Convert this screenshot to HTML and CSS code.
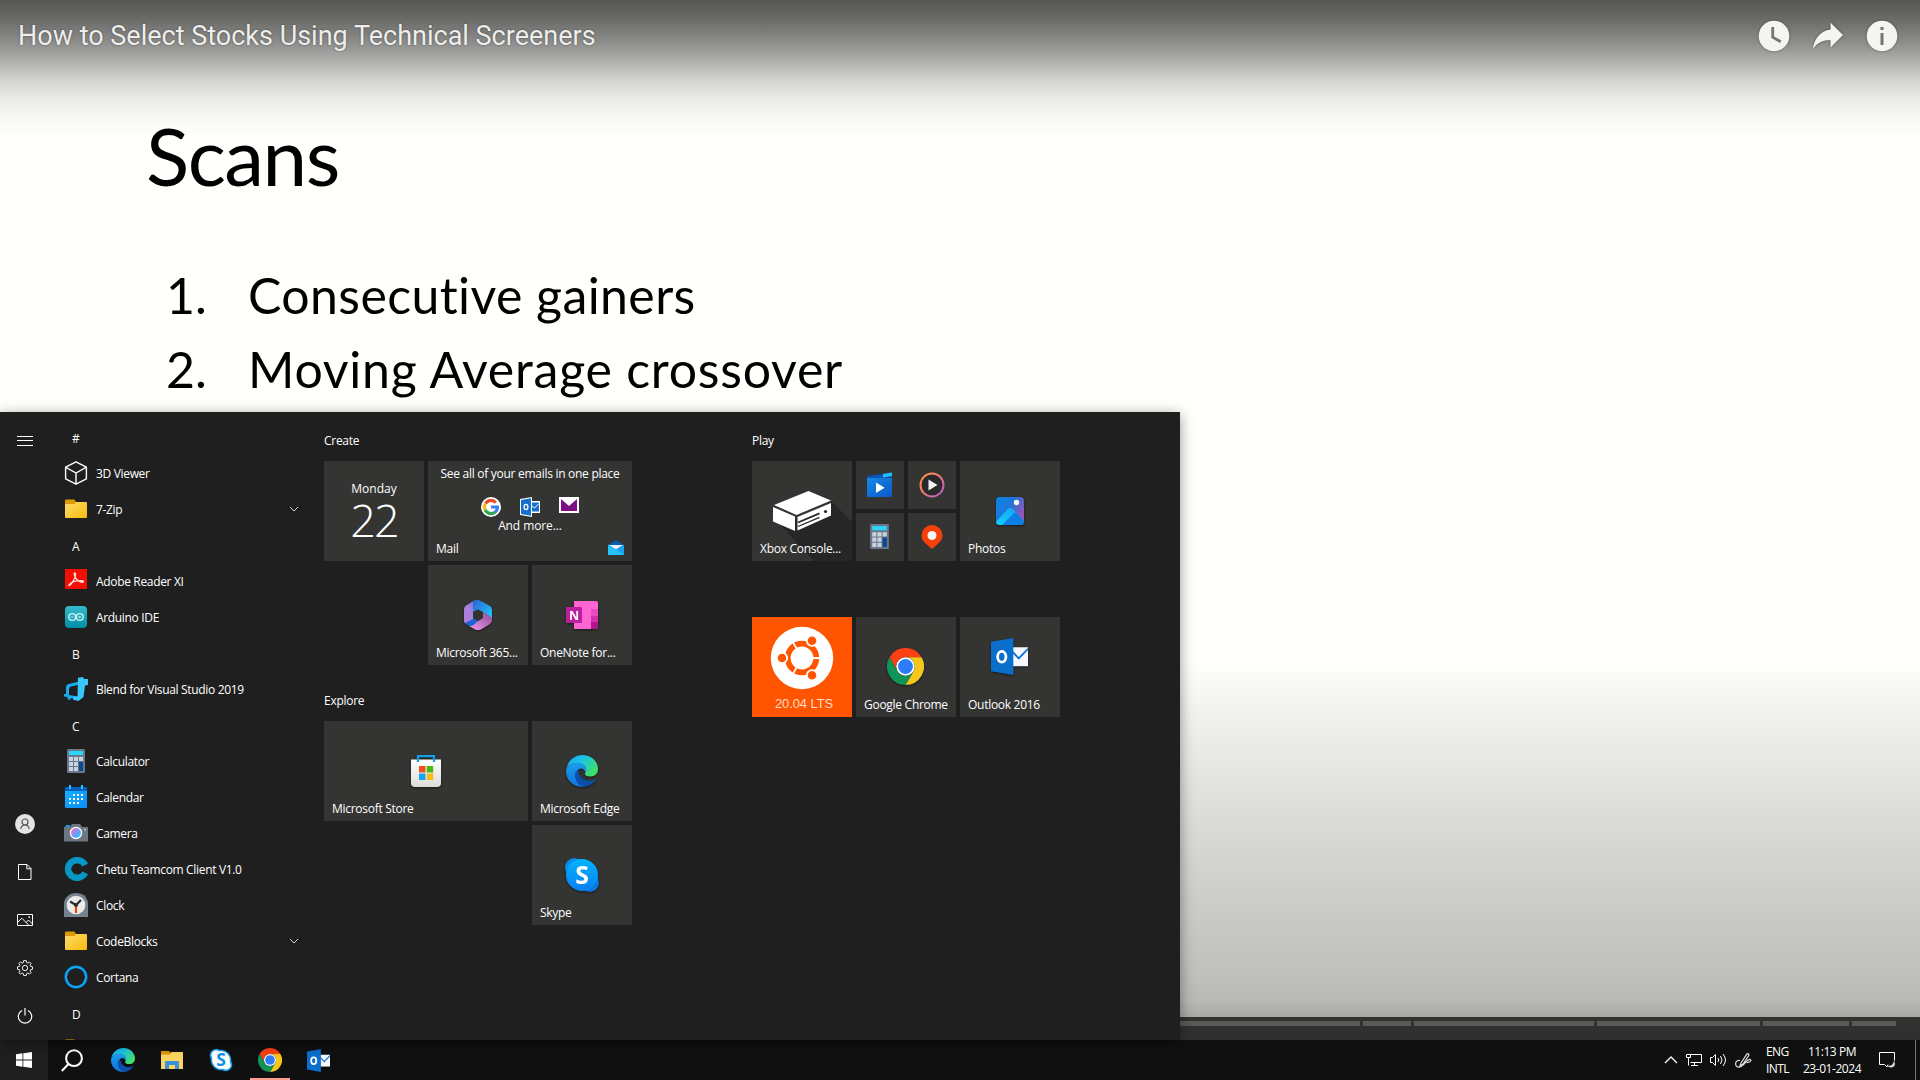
FILE: index.html
```html
<!DOCTYPE html>
<html lang="en">
<head>
<meta charset="utf-8">
<title>How to Select Stocks Using Technical Screeners</title>
<link rel="stylesheet" href="styles.css">
</head>
<body>
<svg class="defs" width="0" height="0" aria-hidden="true">
  <defs>
    <linearGradient id="gEdgeTop" x1="0" y1="0" x2="1" y2=".6"><stop offset="0" stop-color="#1aa5f0"/><stop offset=".45" stop-color="#18c3e6"/><stop offset="1" stop-color="#3fe06a"/></linearGradient>
    <linearGradient id="gEdgeLeft" x1="0" y1="0" x2="0" y2="1"><stop offset="0" stop-color="#1b9de8"/><stop offset="1" stop-color="#0f72e0"/></linearGradient>
    <linearGradient id="gFolder" x1="0" y1="0" x2="1" y2="1"><stop offset="0" stop-color="#ffda6b"/><stop offset="1" stop-color="#f5bc0c"/></linearGradient>
    <linearGradient id="gSkype" x1="0" y1="0" x2="0" y2="1"><stop offset="0" stop-color="#00b4ff"/><stop offset="1" stop-color="#0a7ff0"/></linearGradient>
    <linearGradient id="gArd" x1="0" y1="0" x2="0" y2="1"><stop offset="0" stop-color="#35bccb"/><stop offset="1" stop-color="#008ca4"/></linearGradient>
    <linearGradient id="gLens" x1="0" y1="0" x2="1" y2="1"><stop offset=".1" stop-color="#ff66c4"/><stop offset=".6" stop-color="#58a6ff"/><stop offset="1" stop-color="#2ad0ff"/></linearGradient>
    <linearGradient id="gCal" x1="0" y1="0" x2="1" y2="1"><stop offset="0" stop-color="#12b2ff"/><stop offset="1" stop-color="#0a8bf5"/></linearGradient>
    <linearGradient id="gMovie" x1="0" y1="0" x2="1" y2="1"><stop offset="0" stop-color="#1689e6"/><stop offset="1" stop-color="#0b57c9"/></linearGradient>
    <linearGradient id="gRing" x1="0" y1="0" x2="1" y2="1"><stop offset="0" stop-color="#ff9a3c"/><stop offset=".5" stop-color="#f07878"/><stop offset="1" stop-color="#a85ad8"/></linearGradient>
    <linearGradient id="gPhoto" x1="0" y1="0" x2="1" y2=".6"><stop offset="0" stop-color="#0a86ea"/><stop offset=".5" stop-color="#1f74d8"/><stop offset="1" stop-color="#9b54b8"/></linearGradient>
    <linearGradient id="gHill" x1="0" y1="1" x2="1" y2="0"><stop offset="0" stop-color="#16cfff"/><stop offset="1" stop-color="#149df5"/></linearGradient>
    <linearGradient id="gM1" x1="0" y1="1" x2="1" y2="0"><stop offset="0" stop-color="#b07ad8"/><stop offset=".5" stop-color="#a884de"/><stop offset="1" stop-color="#4a6cd8"/></linearGradient>
    <linearGradient id="gM2" x1="0" y1="0" x2="1" y2="1"><stop offset="0" stop-color="#2a5fd0"/><stop offset="1" stop-color="#22d0ff"/></linearGradient>
    <linearGradient id="gM3" x1="0" y1="1" x2="1" y2="0"><stop offset="0" stop-color="#f09ae6"/><stop offset="1" stop-color="#8a4a9c"/></linearGradient>
    <linearGradient id="gBag" x1="0" y1="0" x2="0" y2="1"><stop offset="0" stop-color="#fff"/><stop offset="1" stop-color="#dcdcda"/></linearGradient>
  </defs>
  <symbol id="edge" viewBox="0 0 24 24">
    <path fill="url(#gEdgeTop)" d="M.3 10C1.6 4 6.5 0 12.3 0 19 0 24 4.8 24 10.5c0 3.500-2.500 5.600-5.500 5.600-3 0-4.400-1-4.400-1.900s1-1.200 1-3C15.100 8.200 12 6.200 8.300 6.200 4.500 6.200 1.500 7.500.3 10z"/>
    <path fill="url(#gEdgeLeft)" d="M0 12c.2-3.600 3.800-6.200 8.300-6.200 3.900 0 6.900 2.200 6.900 5.400 0 .8-.3 1.400-.8 1.900-.3-2-1.600-3-3-3-2.400 0-3.800 2.200-3.800 5 0 4 2.500 7.900 6 8.800C5.400 24.400 0 19 0 12z"/>
    <path fill="#0b4fa8" d="M9.200 10.800C7.200 12 6.500 14 6.700 15.700 7.200 20 10.300 23.800 14 23.900c3.400-.6 6.100-2.200 8-4.800.3-.5-.1-1-.7-.7-1 .5-2.400.8-3.900.8-4.500 0-8-3.300-8.200-8.400z"/>
  </symbol>
  <symbol id="chrome" viewBox="0 0 24 24">
    <path fill="#fb4012" d="M1.600 6a12 12 0 0 1 20.800 0H12a6 6 0 0 0-5.200 9z"/>
    <path fill="#f5c61b" d="M22.400 6A12 12 0 0 1 12 24l5.200-9A6 6 0 0 0 12 6z"/>
    <path fill="#109457" d="M12 24A12 12 0 0 1 1.600 6l5.200 9a6 6 0 0 0 10.400 0z"/>
    <circle cx="12" cy="12" r="6" fill="#fff"/><circle cx="12" cy="12" r="4.800" fill="#2b7cf6"/>
  </symbol>
  <symbol id="outlook" viewBox="0 0 24 24">
    <path fill="#f5f9ff" d="M13 6h11v12.300H13z"/>
    <path fill="none" stroke="#0b6fd0" stroke-width="1.200" d="M14 9l4 4.200 6-6.200"/>
    <path fill="#0a6ecb" d="M0 2.500 14.500 0v24L0 21.500z"/>
    <ellipse cx="7" cy="12.200" rx="2.700" ry="3.500" fill="none" stroke="#fff" stroke-width="1.800"/>
  </symbol>
  <symbol id="calc" viewBox="0 0 18 24">
    <rect width="18" height="24" rx="1.200" fill="#68788a"/><path fill="#2bd4f8" d="M2 2h14v4H2z"/>
    <path fill="#c9d3de" d="M2 8h4v4H2zM7 8h4v4H7zM12 8h4v4h-4zM2 13h4v4H2zM7 13h4v4H7zM2 18h4v4H2zM7 18h4v4H7z"/><path fill="#0a4790" d="M12 13h4v9h-4z"/>
  </symbol>
  <symbol id="folder" viewBox="0 0 24 24">
    <path fill="#dd9a06" d="M1 3.500q0-1 1-1h8l2 2v5H1z"/><path fill="url(#gFolder)" d="M1 7h9.500l1.500-2h10q1 0 1 1v14q0 1-1 1H2q-1 0-1-1z"/>
  </symbol>
  <symbol id="chev" viewBox="0 0 10 6"><path fill="none" stroke="#d0d0d0" d="M1 1l4 4 4-4"/></symbol>
</svg>

<div class="desktop">
  <main class="video">
    <header class="bar">
      <span class="title">How to Select Stocks Using Technical Screeners</span>
      <nav class="actions">
        <svg width="32" height="32" viewBox="0 0 32 32"><circle cx="16" cy="16" r="15.300" fill="#f4f4f1"/><path fill="none" stroke="#757573" stroke-width="2.800" d="M14.700 7v10.200l8 4.500"/></svg>
        <svg width="32" height="32" viewBox="0 0 32 32"><path fill="#f4f4f1" d="M18.500 2.500l12.500 12.500-12.500 12.500v-7.200C10.500 20 5 22.500.8 29.500 2 19 8 11 18.500 9.500z"/></svg>
        <svg width="32" height="32" viewBox="0 0 32 32"><circle cx="16" cy="16" r="15.300" fill="#f4f4f1"/><path fill="#757573" d="M14.500 7h3v3h-3zM14.500 13h3v12h-3z"/></svg>
      </nav>
    </header>
    <section class="slide">
      <h1>Scans</h1>
      <ol>
        <li><span class="num">1.</span><span class="l1">Consecutive gainers</span></li>
        <li><span class="num">2.</span><span class="l2">Moving Average crossover</span></li>
      </ol>
    </section>
    <footer class="player">
      <div class="progress"><i class="s1"></i><i class="s2"></i><i class="s3"></i><i class="s4"></i><i class="s5"></i><i class="s6"></i></div>
    </footer>
  </main>

  <aside class="start">
    <nav class="rail">
      <svg class="burger" width="16" height="10" viewBox="0 0 16 10"><path stroke="#fff" d="M0 .5h16M0 4.500h16M0 9.500h16"/></svg>
      <span class="push"></span>
      <b><svg width="20" height="20" viewBox="0 0 20 20"><circle cx="10" cy="10" r="10" fill="#e4e4e2"/><g fill="none" stroke="#555" stroke-width="1.200"><circle cx="10" cy="8" r="3"/><path d="M5.700 15c.5-2.500 2.200-4 4.300-4s3.800 1.500 4.300 4"/></g></svg></b>
      <b><svg width="14" height="16" viewBox="0 0 14 16"><path fill="none" stroke="#fff" d="M.5.500h8.500l4 4v11H.5zM8.800.5v4.300H13"/></svg></b>
      <b><svg width="16" height="12" viewBox="0 0 16 12"><path fill="none" stroke="#fff" d="M.5.500h15v11H.5zM.5 8.500l4.300-4.300 7 7M9 8.500l2.500-2.500 4 4"/><path fill="#fff" d="M11.500 2.500h1.500v1.500h-1.500z"/></svg></b>
      <b><svg width="16" height="16" viewBox="0 0 16 16"><g fill="none" stroke="#eee"><circle cx="8" cy="8" r="2.700"/><path stroke-linejoin="round" d="M6.700.6h2.600l.4 2 1.200.5L12.600 2l1.500 1.500-1.100 1.700.5 1.200 2 .4v2.500l-2 .4-.5 1.200 1.100 1.700-1.500 1.500-1.700-1.100-1.200.5-.4 2H6.700l-.4-2-1.200-.5L3.400 14 1.900 12.600 3 10.900l-.5-1.200-2-.4V6.800l2-.4L3 5.200 1.900 3.500 3.400 2l1.700 1.100 1.200-.5z"/></g></svg></b>
      <b><svg width="16" height="16" viewBox="0 0 16 16"><path fill="none" stroke="#fff" stroke-width="1.200" d="M5 2.500a6.700 6.700 0 1 0 6 0M8 0v7.500"/></svg></b>
    </nav>

    <ul class="apps">
      <li class="h">#</li>
      <li><svg viewBox="0 0 24 24"><path fill="none" stroke="#fff" stroke-width="1.400" stroke-linejoin="round" d="M12 .8l10.400 5.400v11.600L12 23.200 1.600 17.800V6.200zM1.800 6.400L12 12l10-5.600M12 12v11"/></svg>3D Viewer</li>
      <li><svg><use href="#folder"/></svg>7-Zip<svg class="chev"><use href="#chev"/></svg></li>
      <li class="h">A</li>
      <li><svg viewBox="0 0 24 24"><path fill="#f50f02" d="M1 0h22v20H1z"/><path fill="none" stroke="#ffe4e0" stroke-width="1.300" d="M5 16.500c2-.3 6.300-7 6.600-11 0-2-1.600-2-1.400 0 .6 4 5.300 8.500 8.800 7.600 1.500-.9-1-1.700-3.400-1.500-4 .2-8.400 1.900-10 3.600-.8.900-.6 1.300-.6 1.300z"/></svg>Adobe Reader XI</li>
      <li><svg viewBox="0 0 24 24"><rect x="1" y="1" width="22" height="22" rx="4" fill="url(#gArd)"/><g fill="none" stroke="#cdf3f5" stroke-width="1.400"><circle cx="8.200" cy="12" r="3.400"/><circle cx="15.800" cy="12" r="3.400"/><path stroke-width=".9" d="M6.800 12h2.800M14.400 12h2.800M15.800 10.600v2.800"/></g></svg>Arduino IDE</li>
      <li class="h">B</li>
      <li><svg viewBox="0 0 24 24"><path fill="#19a9ee" d="M2 10q0-2.500 2.500-3L15 4.500v3.300L7 9.500Q5 10 5 12v6l9 1.500V22l-7.500-1v2l-3-.8V20L0 19.500V17h2z"/><path fill="#38c6ff" d="M14 .8l5-.8 1 2h4v6l-3 .5L19.500 20l-5 4-5.500-1.300v-3h4.500z"/></svg>Blend for Visual Studio 2019</li>
      <li class="h">C</li>
      <li><svg><use href="#calc"/></svg>Calculator</li>
      <li><svg viewBox="0 0 24 24"><path fill="#0a5fc4" d="M1 2h22v5H1z"/><path fill="url(#gCal)" d="M1 6h22v16q0 1-1 1H2q-1 0-1-1z"/><path fill="#27c9f5" d="M5 0h2v4H5zM17 0h2v4h-2z"/><path fill="#fff" d="M9 9h2v2H9zM13 9h2v2h-2zM17 9h2v2h-2zM5 13h2v2H5zM9 13h2v2H9zM13 13h2v2h-2zM17 13h2v2h-2zM5 17h2v2H5zM9 17h2v2H9zM13 17h2v2h-2z"/></svg>Calendar</li>
      <li><svg viewBox="0 0 24 24"><path fill="#1399f2" d="M2 4h4v3H1z"/><path fill="#6c7681" d="M0 6h6l2-3h8l2 3h6v14.500H0z"/><circle cx="12" cy="12" r="6.200" fill="#fff"/><circle cx="12" cy="12" r="5" fill="url(#gLens)"/><path fill="#b9c3cd" d="M20 8h2v1.600h-2z"/></svg>Camera</li>
      <li><svg viewBox="0 0 24 24"><path fill="none" stroke="#0897c4" stroke-width="6.400" d="M21.200 8.200A9 8.800 0 1 0 21.200 15.800"/></svg>Chetu Teamcom Client V1.0</li>
      <li><svg viewBox="0 0 24 24"><path fill="#454545" d="M16 1l6 1v5z"/><path fill="#75828f" d="M0 24V11a12 11 0 0 1 24 0v13z"/><circle cx="12" cy="12" r="9.300" fill="#ebebea"/><path stroke="#2c2c2c" stroke-width="2.200" fill="none" d="M6 8.500l6 3.500 5-5"/><path stroke="#f0440e" stroke-width="2.200" d="M12 13v7"/><circle cx="12" cy="12" r="2" fill="#2c2c2c"/></svg>Clock</li>
      <li><svg><use href="#folder"/></svg>CodeBlocks<svg class="chev"><use href="#chev"/></svg></li>
      <li><svg viewBox="0 0 24 24"><circle cx="12" cy="12" r="10.400" fill="none" stroke="#0a5f98" stroke-width="2.800"/><circle cx="12" cy="12" r="10" fill="none" stroke="#12a9fb" stroke-width="1.900"/></svg>Cortana</li>
      <li class="h">D</li>
      <li><svg><use href="#folder"/></svg></li>
    </ul>

    <div class="column">
      <h2>Create</h2>
      <div class="tiles">
        <div class="tile m date"><span>Monday</span><strong>22</strong></div>
        <div class="tile w mail">
          <span class="lead">See all of your emails in one place</span>
          <span class="logos">
            <svg width="20" height="20" viewBox="0 0 20 20"><circle cx="10" cy="10" r="10" fill="#fff"/><g fill="none" stroke-width="3.200"><path stroke="#e94a2b" d="M4.500 6.500A6.500 6.500 0 0 1 14.800 5.600"/><path stroke="#f6bc10" d="M4.400 13.300a6.500 6.500 0 0 1 0-6.600"/><path stroke="#2da652" d="M4.200 13A6.500 6.500 0 0 0 14.200 15"/><path stroke="#3b82f0" d="M10 10h6.500a6.500 6.500 0 0 1-2.500 5.200"/></g></svg>
            <svg width="20" height="20" viewBox="0 0 20 20"><path fill="#fff" d="M0 2l12-2v4h8v12h-8v4L0 18z"/><path fill="#1470cc" d="M1 3l10-1.700v17.400L1 17zM12 5.500h7v9h-7z"/><path fill="none" stroke="#fff" d="M12 9l2.500 2L19 6.500"/><ellipse cx="6" cy="10" rx="1.900" ry="2.700" fill="none" stroke="#fff" stroke-width="1.300"/></svg>
            <svg width="20" height="16" viewBox="0 0 20 16"><path fill="#fff" d="M0 0h20v16H0z"/><path fill="#7b0d86" d="M2 2v12h16V2l-8 7z"/></svg>
          </span>
          <span class="more">And more...</span>
          <label>Mail</label>
          <svg class="badge" width="16" height="15" viewBox="0 0 16 15"><path fill="#0b5cad" d="M0 5l8-5 8 5v4H0z"/><path fill="#f0f3f5" d="M1 5h14l-7 5z"/><path fill="#1aa3f5" d="M0 4.500l8 5 8-5V15H0z"/><path fill="#23c2fb" d="M0 15V4.500L16 15z"/></svg>
        </div>
        <div class="tile m c3"><svg class="ic" width="28" height="30" viewBox="0 0 28 30"><path fill="url(#gM1)" d="M11 0L2 5.500Q0 7 0 9v12q0 2 2 3l8-4-1-1V9l5-3z"/><path fill="url(#gM2)" d="M9 1.500Q13-1.500 17 1l9 5q2 1.500 2 4v9q-1-2-3-3.200L14 9.500 9 12z"/><path fill="url(#gM3)" d="M5 26l6 3.500q3 1 6 0L26 24q2-1.500 2-4 0-3-3-4.500L19 12v6L8 24z"/><path fill="#1c62d0" d="M1 23l2 2q3 2.500 7-.5l4-3.500-5-4V19z"/><path fill="#323232" d="M14 9.500l5 3v5.500l-5 3-5-3v-5.500z"/></svg><label>Microsoft 365...</label></div>
        <div class="tile m"><svg class="ic" width="32" height="28" viewBox="0 0 32 28"><path fill="#ff66d2" d="M8 0h22q2 0 2 2v24q0 2-2 2H8z"/><path fill="#e84ac0" d="M25 8h7v7h-7z"/><path fill="#d62fae" d="M25 15h7v6h-7z"/><path fill="#b3168c" d="M25 21h7v5q0 2-2 2h-5z"/><rect y="6" width="16" height="16" rx="1" fill="#bd1ea0"/><text x="8" y="18.500" text-anchor="middle" font-family="Open Sans" font-weight="700" font-size="12.500" fill="#fff">N</text></svg><label>OneNote for...</label></div>
      </div>
      <h2>Explore</h2>
      <div class="tiles">
        <div class="tile w"><svg class="ic" width="30" height="32" viewBox="0 0 30 32"><path fill="url(#gBag)" d="M0 4.500h30V28q0 4-4 4H4q-4 0-4-4z"/><path fill="none" stroke="#12a0ea" stroke-width="2.200" d="M7 7V1.200h16V7"/><path fill="#f4511e" d="M8 11h6.500v6.500H8z"/><path fill="#4bb80f" d="M15.700 11h6.500v6.500h-6.500z"/><path fill="#14a2f5" d="M8 18.500h6.500V25H8z"/><path fill="#fbb914" d="M15.700 18.500h6.500V25h-6.500z"/></svg><label>Microsoft Store</label></div>
        <div class="tile m"><svg class="ic" width="32" height="32"><use href="#edge"/></svg><label>Microsoft Edge</label></div>
        <div class="tile m c5"><svg class="ic" width="34" height="34" viewBox="0 0 24 24"><circle cx="6.500" cy="6.500" r="6.500" fill="#0a8bea"/><circle cx="17.500" cy="17.500" r="6.500" fill="#0a78dc"/><circle cx="12" cy="12" r="11.300" fill="url(#gSkype)"/><text x="12" y="18.300" text-anchor="middle" font-family="Open Sans" font-weight="700" font-size="17.500" fill="#fff">S</text></svg><label>Skype</label></div>
      </div>
    </div>

    <div class="column play">
      <h2>Play</h2>
      <div class="tiles">
        <div class="tile m"><svg class="art" width="100" height="100" viewBox="0 0 100 100"><path fill="#262626" d="M80 41l20 20v39H62L29 65z"/><path fill="#fff" d="M22 44l34.500-14L79 39.500 44.500 54zM21 46l22 9.500V70L21 60.500zM45.500 56L79 42v12.500L45.500 69.500z"/><path fill="none" stroke="#262626" stroke-width="1.800" d="M46 61.500l21.500-9.200"/><path fill="none" stroke="#262626" stroke-width="1.300" d="M46 65.500l21.500-9.200"/><circle cx="73.500" cy="50.500" r="1.600" fill="#262626"/></svg><label>Xbox Console...</label></div>
        <div class="tile s"><svg width="26" height="26" viewBox="0 0 26 26"><path fill="#0b53b8" d="M0 4l25-3.500V5L4 9H0z"/><path fill="#1fc0f5" d="M16 2l9-1.500V4l-9 1.500z"/><path fill="url(#gMovie)" d="M0 6h25v18q0 1-1 1H1q-1 0-1-1z"/><path fill="#fff" d="M9 10.500l8.500 5.200L9 21z"/></svg></div>
        <div class="tile s"><svg class="media" width="26" height="26" viewBox="0 0 26 26"><circle cx="13" cy="13" r="11.500" fill="#2a2a2a" stroke="url(#gRing)" stroke-width="2"/><path fill="#f2f2f2" d="M9.500 7.500l9 5.500-9 5.500z"/></svg></div>
        <div class="tile m"><svg class="ic" width="28" height="28" viewBox="0 0 28 28"><rect width="28" height="28" rx="4" fill="url(#gPhoto)"/><path fill="url(#gHill)" d="M0 25L11.500 12q2.500-2.500 5 0L28 24q0 4-4 4H4q-4 0-4-3z"/><path fill="#0c7fe2" d="M6 28l11.500-11.500q1.500-1.500 3 0L28 24q0 4-4 4z"/><circle cx="20.500" cy="5.500" r="2.700" fill="#f4f4f4"/></svg><label>Photos</label></div>
        <div class="tile s calc"><svg width="19" height="25"><use href="#calc"/></svg></div>
        <div class="tile s pin"><svg width="22" height="24" viewBox="0 0 22 24"><path fill="#f5400c" d="M11 0a10.500 10.500 0 0 1 10.500 10.500c0 5-4 8-10.500 13.500C4.500 18.500.5 15.500.5 10.500A10.500 10.500 0 0 1 11 0z"/><circle cx="11" cy="10.500" r="4.500" fill="#f5f5f5"/></svg></div>
      </div>
      <h2></h2>
      <div class="tiles">
        <div class="tile m ubuntu"><svg class="art" width="100" height="78" viewBox="0 0 100 78"><circle cx="50" cy="41" r="31.200" fill="#fff"/><circle cx="50" cy="41" r="14.300" fill="none" stroke="#ff5500" stroke-width="5.800"/><path stroke="#fff" stroke-width="1.800" d="M60 41h8M45 32.300L41 25.400M45 49.700l-4 6.900"/><g fill="#ff5500" stroke="#fff" stroke-width="1.800"><circle cx="30" cy="41" r="5.200"/><circle cx="60" cy="23.700" r="5.200"/><circle cx="60" cy="58.300" r="5.200"/></g></svg><span>20.04 LTS</span></div>
        <div class="tile m chr"><svg class="ic" width="37" height="37"><use href="#chrome"/></svg><label>Google Chrome</label></div>
        <div class="tile m up"><svg class="ic" width="37" height="37"><use href="#outlook"/></svg><label>Outlook 2016</label></div>
      </div>
    </div>
  </aside>

  <footer class="taskbar">
    <button class="win"><svg width="16" height="16" viewBox="0 0 16 16"><path fill="#fff" d="M0 2.200l6.500-.9v6.300H0zM7.300 1.200L16 0v7.600H7.300zM0 8.400h6.500v6.300L0 13.800zM7.300 8.400H16V16l-8.700-1.200z"/></svg></button>
    <button class="search"><svg width="22" height="23" viewBox="0 0 22 23"><g fill="none" stroke="#fff" stroke-width="2"><circle cx="13" cy="9.200" r="7.900"/><path d="M7.500 15L.8 22"/></g></svg></button>
    <button><svg width="24" height="24"><use href="#edge"/></svg></button>
    <button><svg width="24" height="24" viewBox="0 0 24 24"><path fill="#d9960a" d="M1 3h8l2 2v4H1z"/><path fill="#fcd462" d="M1 6.500h9L11.500 4H23v17H1z"/><path fill="#3a91dc" d="M5 21v-7q0-1 1-1h12q1 0 1 1v7h-4v-4H9v4z"/></svg></button>
    <button><svg width="24" height="24" viewBox="0 0 24 24"><g fill="#fff" stroke="#12a0f0" stroke-width="1.600"><circle cx="7.300" cy="7.300" r="5.800"/><circle cx="16.700" cy="16.700" r="5.800"/></g><circle cx="12" cy="12" r="9.600" fill="#fff" stroke="#12a0f0" stroke-width="1.400"/><circle cx="7.800" cy="7.800" r="5" fill="#fff"/><circle cx="16.200" cy="16.200" r="5" fill="#fff"/><text x="12" y="18.300" text-anchor="middle" font-family="Open Sans" font-weight="700" font-size="17.500" fill="#0b90e4">S</text></svg></button>
    <button class="on"><svg width="24" height="24"><use href="#chrome"/></svg></button>
    <button><svg width="23" height="23"><use href="#outlook"/></svg></button>
    <span class="push"></span>
    <div class="tray">
      <svg width="14" height="8" viewBox="0 0 14 8"><path fill="none" stroke="#fff" stroke-width="1.300" d="M1 7l6-6 6 6"/></svg>
      <svg width="16" height="14" viewBox="0 0 16 14"><path fill="none" stroke="#fff" d="M5 1.500h10.500v8H4.500M.5 1.500h4v3h-4zM2.500 4.500v8M5 12.500h7M8.500 10v2"/></svg>
      <svg width="17" height="14" viewBox="0 0 17 14"><path fill="none" stroke="#fff" d="M.5 4.500h2l3-3v11l-3-3h-2zM8 5q1.500 2 0 4M10.500 3q3 4 0 8M13 1q5 6 0 12"/></svg>
      <svg width="17" height="17" viewBox="0 0 17 17"><path fill="none" stroke="#ddd" stroke-width="1.200" d="M6 11L12 1.800q2-.8 2 1.200L8 12l-3 1.500zM5 8.500C1 8 0 11 1 13.500s5 2 7-.5l5-5q2-1.500 3 .5-1 1.500-3 2l-2-1"/></svg>
      <span class="lang">ENG<br>INTL</span>
      <span class="clock">11:13 PM<br>23-01-2024</span>
      <svg class="note" width="17" height="16" viewBox="0 0 17 16"><path fill="none" stroke="#fff" d="M9 12.500L8 15l-2.500-2.500H.5v-12h15v8"/><path fill="#ddd" d="M15 8.500c2 4 .5 7-3 7-1.700 0-3-.8-3.500-2 3 1 6-.5 6.500-5z"/></svg>
      <i class="peek"></i>
    </div>
  </footer>
</div>
</body>
</html>
```
FILE: styles.css
```css
* { box-sizing: border-box; margin: 0; padding: 0; }
body { width: 1920px; height: 1080px; overflow: hidden; background: #101010; font-family: "Open Sans", "Noto Sans", sans-serif; }
svg { display: block; flex: none; }
.defs { position: absolute; }
.desktop { position: relative; display: flex; flex-direction: column; height: 1080px; }
.push { flex: 1; }

/* Video surface */
.video {
  height: 1040px; display: flex; flex-direction: column;
  background:
    linear-gradient(to bottom, #555553 0, #6c6c6a 20px, #838381 36px, #9a9a98 50px, #bbbbb9 67px, #d8d8d6 83px, #ebebe8 100px, #f8f8f4 118px, rgba(255,255,251,0) 140px) top / 100% 140px no-repeat,
    linear-gradient(to bottom, #fffffb 0, #fffffb 660px, #f1f1ee 712px, #e6e6e3 767px, #ddddda 808px, #d3d3d1 861px, #c9c9c7 918px, #c0c0be 971px, #b9b9b7 1000px, #a8a8a6 1017px, #333331 1017px, #2f2f2f 1040px);
}
.bar { display: flex; justify-content: space-between; align-items: center; height: 72px; padding: 0 22px 0 18px; }
.title { font: 27px/32px Roboto, sans-serif; color: #eeeeec; text-shadow: 0 0 2px rgba(0,0,0,.5); }
.actions { display: flex; gap: 22px; filter: drop-shadow(0 0 1px rgba(0,0,0,.5)); }
.slide { flex: 1; padding: 35px 0 0 146px; font-family: Lato, sans-serif; color: #000; font-variant-ligatures: none; }
.slide h1 { font-size: 80px; font-weight: 400; line-height: 96px; letter-spacing: -1.500px; }
.slide ol { list-style: none; margin-top: 55px; padding-left: 20px; }
.slide li { display: flex; font-size: 50px; line-height: 74px; }
.num { width: 82px; }
.l1 { letter-spacing: .4px; }
.l2 { letter-spacing: .75px; }
.player { height: 23px; padding: 4px 24px 0 1180px; }
.progress { display: flex; gap: 3px; }
.progress i { height: 5px; background: #5a5a58; }
.s1 { width: 180px; } .s2 { width: 48px; } .s3 { width: 180px; } .s4 { width: 163px; } .s5 { width: 86px; } .s6 { width: 44px; }

/* Start menu, floating above the taskbar */
.start { position: absolute; left: 0; top: 412px; width: 1180px; height: 628px; display: flex; overflow: hidden; background: #1f1f1f; color: #fff; font-size: 12px; letter-spacing: -.28px; }
.desktop::before { content: ""; position: absolute; left: 0; top: 412px; width: 1180px; height: 628px; box-shadow: 0 3px 13px rgba(0,0,0,.42); }
.rail { width: 50px; display: flex; flex-direction: column; align-items: center; padding-top: 24px; }
.rail b { height: 48px; display: flex; align-items: center; }
.apps { width: 274px; list-style: none; padding: 7px 0 0 14px; letter-spacing: -.33px; }
.apps li { height: 36px; display: flex; align-items: center; gap: 8px; }
.apps li svg { width: 24px; height: 24px; }
.apps li .chev { width: 10px; height: 6px; margin: 0 25px 0 auto; }
.apps .h { padding: 3px 0 0 8px; }
.column { width: 308px; }
.play { margin-left: 120px; }
.column h2 { height: 56px; padding-top: 28px; font-size: 12px; line-height: 16px; font-weight: 400; }
.column h2:first-child { height: 49px; padding-top: 21px; }
.tiles { display: grid; grid-template-columns: repeat(6, 48px); grid-auto-rows: 48px; gap: 4px; }
.tile { position: relative; display: flex; align-items: center; justify-content: center; background: #343432; overflow: hidden; }
.m { grid-column: span 2; grid-row: span 2; }
.w { grid-column: span 4; grid-row: span 2; }
.c3 { grid-column: 3 / span 2; }
.c5 { grid-column: 5 / span 2; }
.tile label { position: absolute; left: 8px; bottom: 4px; line-height: 16px; white-space: nowrap; }
.ic { filter: drop-shadow(0 1px 1px rgba(0,0,0,.5)); }
.up { align-items: flex-start; padding-top: 21px; padding-right: 2px; }
.chr { padding-right: 1px; padding-bottom: 1px; }
.calc, .pin { padding-right: 1px; padding-bottom: 1px; }
.art { position: absolute; left: 0; top: 0; }
.date { flex-direction: column; justify-content: flex-start; padding-top: 20px; line-height: 16px; }
.date span { letter-spacing: 0; }
.date strong { font-size: 45px; font-weight: 300; line-height: 46px; letter-spacing: -2px; }
.mail { flex-direction: column; justify-content: flex-start; padding-top: 5px; line-height: 16px; }
.logos { display: flex; gap: 19px; margin-top: 15px; height: 20px; }
.more { margin-top: 1px; letter-spacing: -.1px; }
.badge { position: absolute; right: 8px; bottom: 6px; }
.ubuntu { background: #ff5500; align-items: flex-end; padding-bottom: 5px; }
.ubuntu span { font: 13px/16px "Liberation Sans", sans-serif; letter-spacing: -.1px; color: #ffdcc8; padding-left: 4px; }

/* Taskbar */
.taskbar { height: 40px; display: flex; background: #101010; color: #fff; }
.taskbar button { width: 49px; border: 0; background: none; display: flex; align-items: center; justify-content: center; }
.taskbar .win { width: 48px; background: #1f1f1f; }
.taskbar .search { width: 50px; padding-right: 2px; }
.taskbar .on { background: linear-gradient(#ff9d8e, #ff9d8e) center bottom / 40px 2px no-repeat; }
.tray { display: flex; align-items: center; font-size: 12px; line-height: 17px; white-space: nowrap; }
.tray svg { margin-right: 8px; }
.lang { width: 24px; margin-left: 6px; letter-spacing: -.6px; }
.clock { width: 62px; margin-left: 11px; text-align: center; letter-spacing: -.45px; }
.tray .note { margin: 0 19px 0 16px; }
.peek { width: 5px; height: 40px; border-left: 1px solid #777; }
```
